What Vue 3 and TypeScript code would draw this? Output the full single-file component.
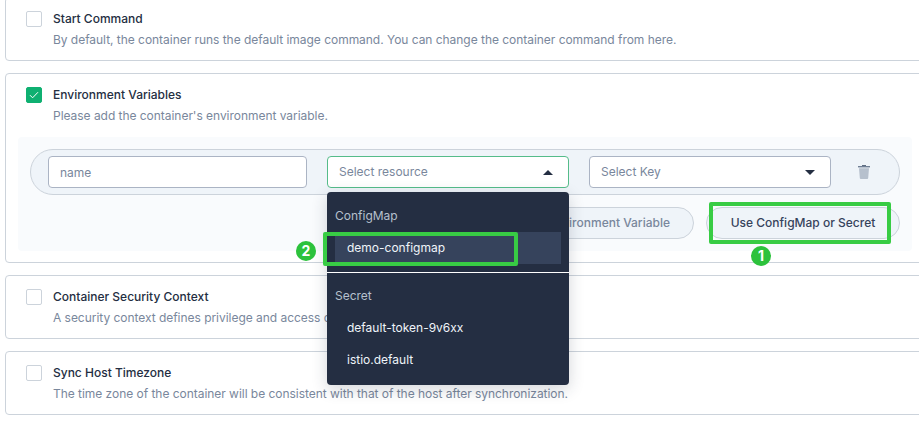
<script setup lang="ts">
interface Section {
  title: string
  desc: string
  checked: boolean
}

const sections: Section[] = [
  { title: 'Start Command', desc: 'By default, the container runs the default image command. You can change the container command from here.', checked: false },
  { title: 'Environment Variables', desc: "Please add the container's environment variable.", checked: true },
  { title: 'Container Security Context', desc: 'A security context defines privilege and access control settings for a container.', checked: false },
  { title: 'Sync Host Timezone', desc: 'The time zone of the container will be consistent with that of the host after synchronization.', checked: false },
]
</script>

<template>
  <div class="page">
    <section v-for="s in sections" :key="s.title" class="card">
      <div class="head">
        <span class="check" :class="{ on: s.checked }">
          <svg v-if="s.checked" width="10" height="8" viewBox="0 0 10 8">
            <path d="M1 4.2 3.6 6.8 9 1.2" fill="none" stroke="#fff" stroke-width="1" />
          </svg>
        </span>
        <div>
          <div class="title">{{ s.title }}</div>
          <div class="desc">{{ s.desc }}</div>
        </div>
      </div>

      <div v-if="s.checked" class="panel">
        <div class="row">
          <div class="input">name</div>
          <div class="select open">
            <span>Select resource</span>
            <i class="arrow up"></i>
            <div class="menu">
              <div class="group">ConfigMap</div>
              <div class="item active">
                demo-configmap
                <span class="mark mark-item"></span>
                <span class="badge badge-item">2</span>
              </div>
              <div class="line"></div>
              <div class="group">Secret</div>
              <div class="item">default-token-9v6xx</div>
              <div class="item">istio.default</div>
            </div>
          </div>
          <div class="select">
            <span>Select Key</span>
            <i class="arrow"></i>
          </div>
          <svg class="trash" width="12" height="14" viewBox="0 0 12 14">
            <path d="M4 0h4v1H4z" fill="#5f6e83" />
            <path d="M0 1h12v1.400H0z" fill="#707f95" />
            <path d="M1 3.200h10l-.8 9.900a1 1 0 0 1-1 .9H2.800a1 1 0 0 1-1-.9z" fill="#b6c0cd" />
          </svg>
        </div>
        <div class="actions">
          <button class="pill add">Add Environment Variable</button>
          <button class="pill use">
            Use ConfigMap or Secret
            <span class="mark mark-use"></span>
            <span class="badge badge-use">1</span>
          </button>
        </div>
      </div>
    </section>
  </div>
</template>

<style>
html,
body {
  margin: 0;
  overflow: hidden;
  background: #fff;
}
</style>

<style scoped>
.page {
  width: 960px;
  margin-top: -3px;
  padding-left: 5px;
  display: flex;
  flex-direction: column;
  gap: 12px;
  font-family: Inter, "Noto Sans", sans-serif;
  font-size: 12px;
  line-height: 20px;
  color: #242e42;
}

.card {
  border: 1px solid #ccd3db;
  border-radius: 4px;
  padding: 12px 12px 14px;
  background: #fff;
}

.card:has(.panel) {
  padding-bottom: 11px;
}

.head {
  display: flex;
  gap: 11px;
  padding-left: 8px;
  height: 36px;
}

.check {
  width: 16px;
  height: 16px;
  box-sizing: border-box;
  border: 1px solid #ccd3db;
  border-radius: 2px;
  flex: none;
  display: flex;
  align-items: center;
  justify-content: center;
  background: #fff;
  margin-top: 1px;
}

.check.on {
  background: #0fb071;
  border-color: #0fb071;
}

.title {
  font-weight: 500;
  height: 20px;
  line-height: 18px;
}

.desc {
  color: #79879c;
  line-height: 20px;
  letter-spacing: -0.035px;
}

.panel {
  margin-top: 15px;
  width: 870px;
  padding: 12px;
  background: #f9fbfd;
  border-radius: 4px;
}

.row {
  height: 46px;
  box-sizing: border-box;
  border: 1px solid #ccd3db;
  border-radius: 23px;
  background: #eff4f9;
  display: flex;
  align-items: center;
  gap: 20px;
  padding: 0 17px;
}

.input,
.select {
  height: 32px;
  box-sizing: border-box;
  border: 1px solid #abb4c4;
  border-radius: 4px;
  background: #fff;
  color: #79879c;
  display: flex;
  align-items: center;
  padding-left: 11px;
  flex: none;
}

.input {
  width: 259px;
  padding-top: 2px;
}

.select {
  width: 242px;
  position: relative;
  justify-content: space-between;
  padding-right: 15px;
}

.select.open {
  border-color: #55bc8a;
}

.arrow {
  width: 0;
  height: 0;
  border-left: 5px solid transparent;
  border-right: 5px solid transparent;
  border-top: 5px solid #242e42;
}

.arrow.up {
  border-top: 0;
  border-bottom: 5px solid #242e42;
}

.menu {
  position: absolute;
  top: 35px;
  left: -1px;
  width: 242px;
  height: 193px;
  padding-top: 12px;
  box-sizing: border-box;
  background: #242e42;
  border-radius: 4px;
  box-shadow: 0 4px 16px rgba(36, 46, 66, 0.2);
  color: #fff;
  z-index: 2;
}

.group {
  height: 28px;
  line-height: 24px;
  padding-left: 8px;
  color: #b6c0cd;
}

.item {
  position: relative;
  height: 32px;
  line-height: 32px;
  margin: 0 8px;
  padding-left: 12px;
  color: #eff4f9;
}

.item.active {
  background: #36435c;
}

.line {
  height: 1px;
  margin: 8px 0 11px;
  background: #fff;
}

.trash {
  margin-left: 7px;
}

.actions {
  display: flex;
  justify-content: flex-end;
  gap: 12px;
  margin-top: 12px;
}

.pill {
  position: relative;
  height: 32px;
  box-sizing: border-box;
  border: 1px solid #ccd3db;
  border-radius: 16px;
  background: #eff4f9;
  font: inherit;
  font-weight: 500;
  padding: 0 23px;
  white-space: nowrap;
}

.add {
  color: #79879c;
}

.use {
  width: 194px;
  color: #36435c;
}

.mark {
  position: absolute;
  box-sizing: border-box;
  border: 4px solid #38cc44;
  border-radius: 2px;
}

.mark-use {
  left: 2px;
  top: -6px;
  width: 182px;
  height: 42px;
}

.mark-item {
  left: -12px;
  top: 0;
  width: 195px;
  height: 34px;
}

.badge {
  position: absolute;
  width: 20px;
  height: 20px;
  border-radius: 50%;
  background: #2cc23c;
  color: #fff;
  font-size: 14px;
  font-weight: 700;
  line-height: 20px;
  text-align: center;
}

.badge-use {
  left: 44px;
  top: 38px;
}

.badge-item {
  left: -39px;
  top: 9px;
}
</style>
